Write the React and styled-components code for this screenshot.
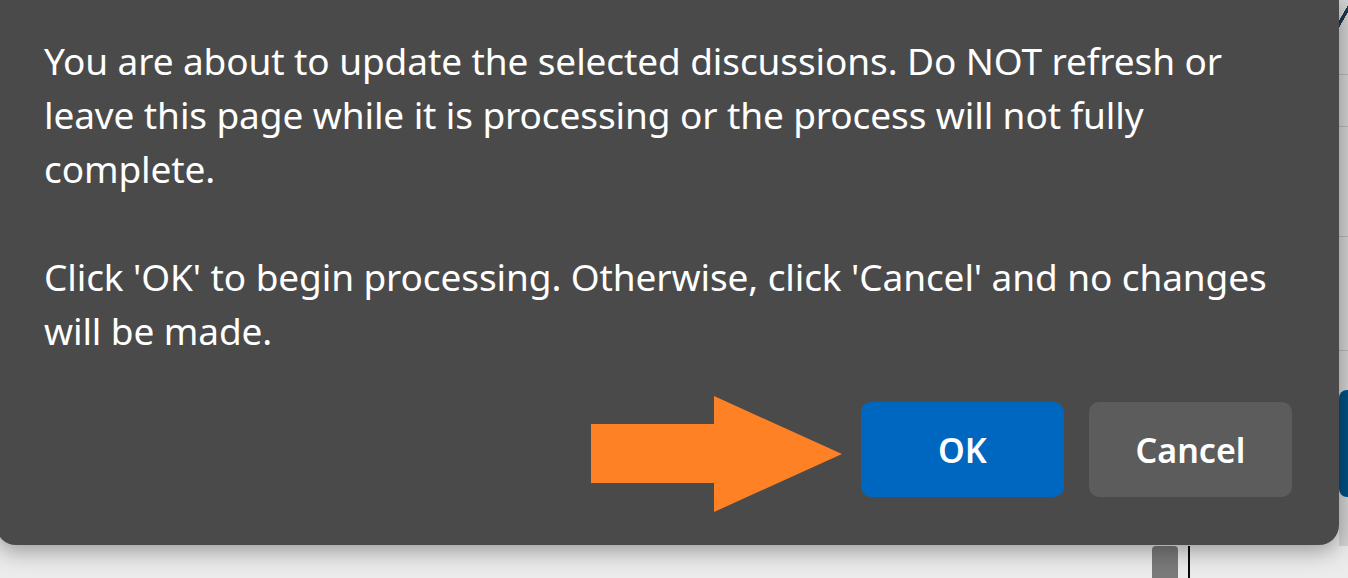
import React from 'react';
import styled, { createGlobalStyle } from 'styled-components';

const GlobalStyle = createGlobalStyle`
  html, body {
    margin: 0;
    padding: 0;
    overflow: hidden;
  }
  body {
    font-family: 'Noto Sans', 'Open Sans', sans-serif;
  }
`;

const Page = styled.div`
  position: relative;
  width: 1348px;
  height: 578px;
  overflow: hidden;
  background: linear-gradient(180deg, #d6d6d6 0%, #e4e4e4 80%, #ececec 100%);
  display: flex;
  flex-direction: column;
`;

// the page sitting behind the modal
const Behind = styled.div`
  flex: 1;
  display: flex;
  justify-content: flex-end;
`;

const SidePanel = styled.div`
  width: 9px;
  display: flex;
  flex-direction: column;
  background: #d2d2d2;
`;

const SideRow = styled.div`
  height: ${(p) => p.h}px;
  border-bottom: 1px solid #b4b4b4;
  flex-shrink: 0;
`;

const Slash = styled.div`
  height: 30px;
  flex-shrink: 0;
  background: linear-gradient(
    120deg,
    transparent 45%,
    #1c3550 46%,
    #1c3550 60%,
    transparent 61%
  );
`;

const SideButton = styled.div`
  margin-top: auto;
  margin-bottom: 49px;
  height: 107px;
  background: #004f80;
  border-radius: 8px 0 0 8px;
`;

const BottomStrip = styled.div`
  height: 32px;
  display: flex;
  padding-left: 1152px;
  gap: 10px;
`;

const ScrollThumb = styled.div`
  width: 26px;
  background: #7a7a7a;
  border-radius: 4px 4px 0 0;
`;

const Rule = styled.div`
  width: 2px;
  background: #0a0a0a;
`;

const Dialog = styled.div`
  position: absolute;
  left: -4px;
  top: 0;
  width: 1343px;
  height: 545px;
  box-sizing: border-box;
  background: #4a4a4a;
  border-radius: 0 0 20px 20px;
  box-shadow: 0 6px 22px rgba(0, 0, 0, 0.35);
  padding: 34px 47px 48px 48px;
  display: flex;
  flex-direction: column;
  color: #ffffff;
`;

const Message = styled.p`
  margin: 0;
  font-size: 37px;
  line-height: 54px;
  font-weight: 400;
  letter-spacing: -0.1px;

  & + & {
    margin-top: 54px;
  }
`;

const Actions = styled.div`
  margin-top: auto;
  height: 95px;
  display: flex;
  justify-content: flex-end;
  align-items: flex-start;
  gap: 25px;
`;

const Arrow = styled.svg`
  display: block;
  flex-shrink: 0;
  width: 252px;
  height: 116px;
  margin: -6px -7px 0 0;
`;

const Button = styled.button`
  width: 203px;
  height: 95px;
  flex-shrink: 0;
  border: none;
  border-radius: 10px;
  font-family: inherit;
  font-size: 34px;
  font-weight: 600;
  color: #ffffff;
  background: ${(p) => (p.primary ? '#0067c0' : '#5c5c5c')};
  cursor: pointer;
`;

export default function App() {
  return (
    <>
      <GlobalStyle />
      <Page>
        <Behind>
          <SidePanel>
            <Slash />
            <SideRow h={44} />
            <SideRow h={51} />
            <SideRow h={109} />
            <SideRow h={113} />
            <SideButton />
          </SidePanel>
        </Behind>
        <BottomStrip>
          <ScrollThumb />
          <Rule />
        </BottomStrip>

        <Dialog role="dialog">
          <Message>
            You are about to update the selected discussions. Do NOT refresh or
            leave this page while it is processing or the process will not fully
            complete.
          </Message>
          <Message>
            Click 'OK' to begin processing. Otherwise, click 'Cancel' and no
            changes will be made.
          </Message>
          <Actions>
            <Arrow viewBox="0 0 252 116">
              <polygon
                points="0,28 123,28 123,0 251,58 123,116 123,87 0,87"
                fill="#ff8125"
              />
            </Arrow>
            <Button primary>OK</Button>
            <Button>Cancel</Button>
          </Actions>
        </Dialog>
      </Page>
    </>
  );
}
